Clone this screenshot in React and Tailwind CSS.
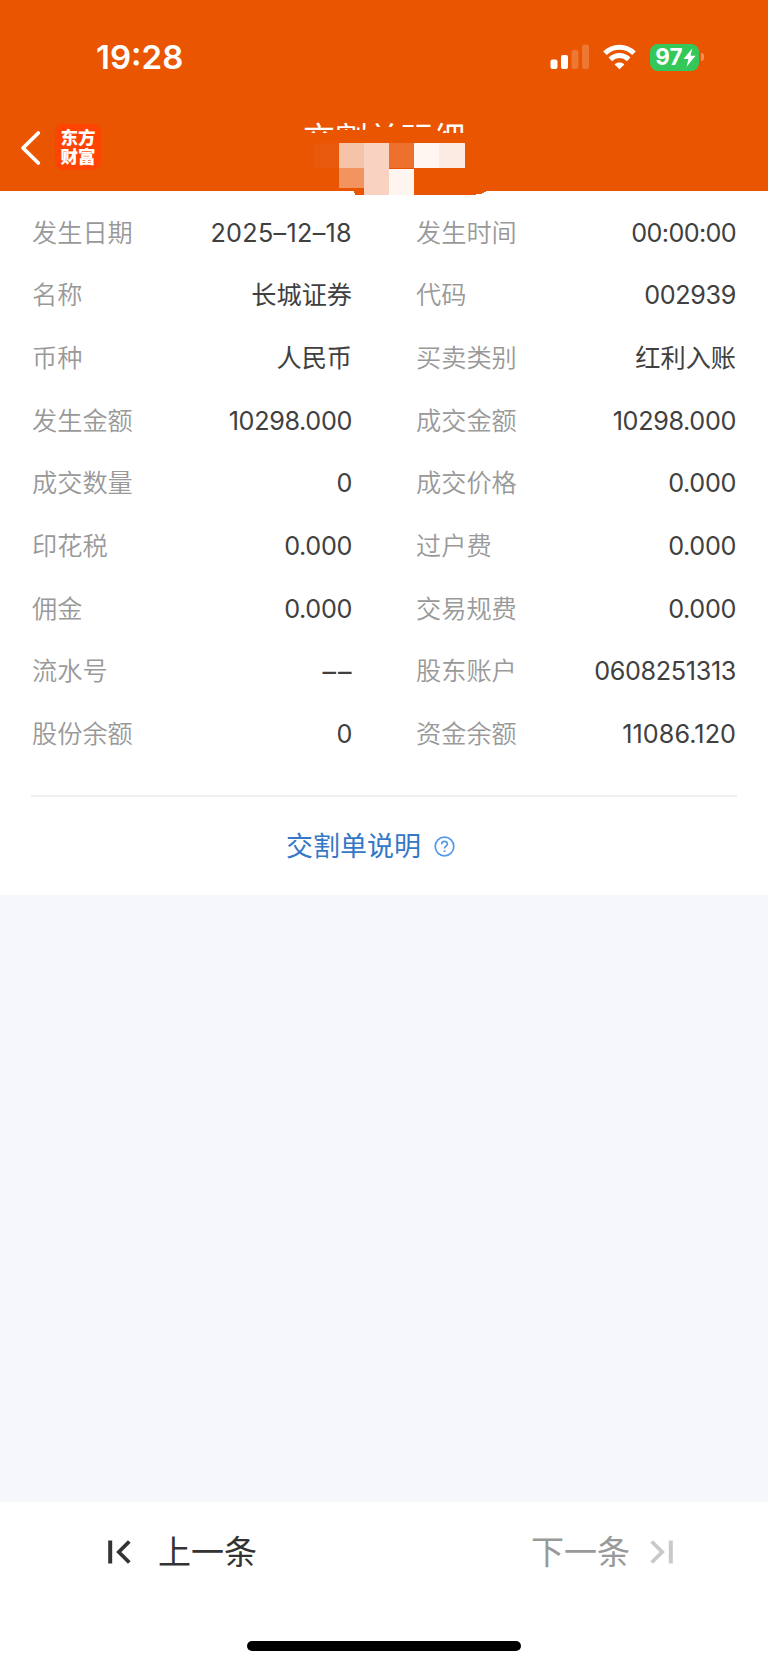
const rows = [
  ["发生日期", "2025–12–18", "发生时间", "00:00:00"],
  ["名称", "长城证券", "代码", "002939"],
  ["币种", "人民币", "买卖类别", "红利入账"],
  ["发生金额", "10298.000", "成交金额", "10298.000"],
  ["成交数量", "0", "成交价格", "0.000"],
  ["印花税", "0.000", "过户费", "0.000"],
  ["佣金", "0.000", "交易规费", "0.000"],
  ["流水号", "––", "股东账户", "0608251313"],
  ["股份余额", "0", "资金余额", "11086.120"],
];

function spacing(value) {
  if (value === "––") return "text-[27px] tracking-[2px] -mr-[1.6px]";
  if (value.includes("–")) return "text-[25.2px] tracking-[0.3px]";
  if (value.includes(":")) return "text-[25.2px] tracking-[-0.65px]";
  if (value.startsWith("11")) return "text-[25.2px] tracking-[0.05px]";
  if (/^[\d.]+$/.test(value)) return "text-[25.2px] tracking-[-0.35px]";
  return "text-[25.2px]";
}

function Field({ label, value }) {
  return (
    <div className="flex h-[62.65px] items-center justify-between leading-none">
      <span className="text-[25.2px] font-[350] text-[#999999]">{label}</span>
      <span className={`text-[#404040] ${spacing(value)}`}>{value}</span>
    </div>
  );
}

function StatusBar() {
  return (
    <div className="flex h-[114px] items-center justify-between pl-[96px] pr-[64px]">
      <span className="text-[33px] font-semibold leading-none text-white">19:28</span>
      <div className="flex items-center">
        <svg className="h-[26px] w-[39px]" viewBox="0 0 39 26" fill="#fff">
          <rect x="0.5" y="15.5" width="7" height="9.5" rx="2" />
          <rect x="11" y="11" width="7" height="14" rx="2" />
          <rect x="21.5" y="6" width="7" height="19" rx="2" opacity="0.2" />
          <rect x="32" y="0.5" width="7" height="24.5" rx="2" opacity="0.2" />
        </svg>
        <svg className="ml-[14px] h-[26px] w-[33px]" viewBox="0 0 33 26" fill="none" stroke="#fff" strokeWidth="5">
          <path d="M2 9.3C10 1.2 23 1.2 31 9.3" />
          <path d="M7.3 15.4C12.5 10.3 20.5 10.3 25.7 15.4" />
          <path d="M16.5 25.2L11.6 20.4C14.4 17.9 18.6 17.9 21.4 20.4Z" fill="#fff" stroke="none" />
        </svg>
        <div className="ml-[14px] flex h-[27px] w-[49px] items-center justify-center rounded-[8px] bg-[#34c759] pl-[2px] text-white">
          <span className="text-[22.5px] font-bold leading-none">97</span>
          <svg className="h-[19px] w-[13px]" viewBox="0 0 12 18" fill="#fff">
            <path d="M8.6 0.5L0.3 10.4H5L3.2 17.7L11.8 7.4H7Z" />
          </svg>
        </div>
        <span className="ml-[2px] h-[8px] w-[3px] rounded-r-full bg-white/35" />
      </div>
    </div>
  );
}

// orange smear and pixel blocks that hide the account under the title
function Mosaic() {
  return (
    <svg className="absolute left-[284px] top-[6px] h-[76px] w-[212px]" viewBox="284 120 212 76" shapeRendering="crispEdges">
      <path
        d="M284 133H330L336 130.5L364 130L372 127H434L440 133H484V190H490Q486 191 483 193Q481 194.5 476 194.5H355L353 190H284Z"
        fill="#e95500"
      />
      <rect x="314" y="143" width="25" height="25" fill="#e9590c" />
      <rect x="339" y="143" width="25" height="25" fill="#f5c4a8" />
      <rect x="364" y="143" width="25" height="52" fill="#fad2c1" />
      <rect x="389" y="143" width="25" height="25" fill="#ed702c" />
      <rect x="414" y="143" width="25" height="25" fill="#fff6f1" />
      <rect x="439" y="143" width="26" height="25" fill="#fcebe2" />
      <rect x="339" y="168" width="25" height="20" fill="#f3935f" />
      <rect x="389" y="169" width="25" height="26" fill="#fef5f1" />
    </svg>
  );
}

function NavBar() {
  return (
    <div className="relative flex h-[77px] items-start pl-[20px] pt-[10px]">
      <svg className="mt-[6px] h-[36px] w-[21px]" viewBox="0 0 21 36" fill="none" stroke="#fff" strokeWidth="3.8" strokeLinecap="round" strokeLinejoin="round">
        <path d="M18.3 3L3 18L18.3 33" />
      </svg>
      <div className="ml-[14px] flex h-[46px] w-[46px] flex-col items-center justify-center rounded-[8px] bg-[#fe4403] text-[17.5px] font-black leading-[19px] text-white">
        <span>东方</span>
        <span>财富</span>
      </div>
      <h1 className="absolute left-0 top-[6px] w-full text-center text-[32.5px] leading-[40px] text-white">交割单明细</h1>
      <Mosaic />
    </div>
  );
}

function SkipIcon({ className }) {
  return (
    <svg className={className} viewBox="0 0 24 24" fill="none" stroke="currentColor" strokeWidth="3.8">
      <path d="M3.2 0.5V23.5" strokeWidth="4" />
      <path d="M22.3 1.5L11.8 12L22.3 22.5" />
    </svg>
  );
}

export default function App() {
  return (
    <div className="relative flex h-[1667px] w-[768px] flex-col bg-[#f6f7fa] font-['Inter','Noto_Sans_CJK_SC',sans-serif]">
      <header className="bg-[#e95500]">
        <StatusBar />
        <NavBar />
      </header>

      <main className="h-[704px] bg-white px-[31px] pt-[11px]">
        <div className="px-px">
          {rows.map(([l1, v1, l2, v2]) => (
            <div key={l1} className="grid grid-cols-2 gap-x-[64px]">
              <Field label={l1} value={v1} />
              <Field label={l2} value={v2} />
            </div>
          ))}
        </div>
        <div className="mt-[29px] h-[2px] bg-[#efefef]" />
        <div className="flex h-[100px] items-center pl-[255px]">
          <span className="text-[27px] leading-none text-[#3478c7]">交割单说明</span>
          <svg className="-mt-px ml-[13px] h-[21px] w-[21px]" viewBox="0 0 21 21" fill="none" stroke="#5599ea" strokeWidth="1.7">
            <circle cx="10.5" cy="10.5" r="9.3" />
            <path d="M7.6 8.3C7.6 4.3 13.4 4.5 13.4 8C13.4 10.2 10.5 10.2 10.5 12.6" />
            <path d="M10.5 14.2V16" />
          </svg>
        </div>
      </main>

      <footer className="mt-auto h-[165px] bg-white">
        <div className="flex h-[100px] items-center justify-between pl-[107px] pr-[94px] text-[33px] leading-none">
          <button className="flex items-center text-[#333333]">
            <SkipIcon className="h-[24px] w-[24px]" />
            <span className="ml-[27px]">上一条</span>
          </button>
          <button className="flex items-center text-[#999999]">
            <span>下一条</span>
            <SkipIcon className="ml-[20px] h-[24px] w-[24px] rotate-180 text-[#c9c9c9]" />
          </button>
        </div>
        <div className="mx-auto mt-[39px] h-[10px] w-[274px] rounded-full bg-black" />
      </footer>
    </div>
  );
}
